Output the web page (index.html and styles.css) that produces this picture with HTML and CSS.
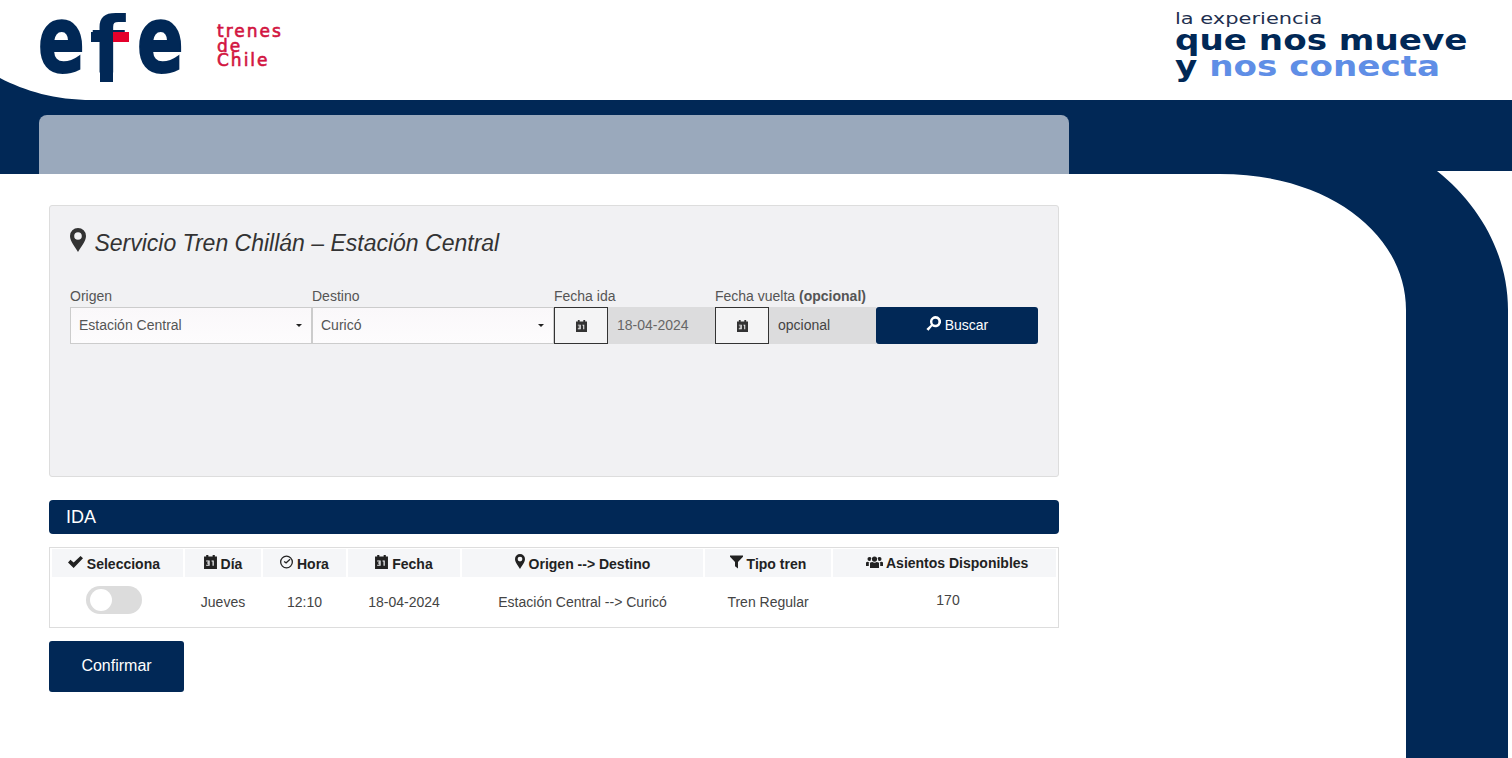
FILE: index.html
```html
<!DOCTYPE html>
<html lang="es">
<head>
  <meta charset="UTF-8">
  <meta name="viewport" content="width=device-width, initial-scale=1.0">
  <title>EFE Trenes de Chile - Venta de pasajes</title>
  <link rel="stylesheet" href="styles.css">
</head>
<body>
  <svg width="0" height="0" class="icon-defs">
    <symbol id="i-pin" viewBox="0 0 16 24"><path fill-rule="evenodd" d="M8 0a8 8 0 0 1 8 8c0 5-5 11-8 16C5 19 0 13 0 8a8 8 0 0 1 8-8zm0 4.2a3.8 3.8 0 1 0 0 7.6 3.8 3.800 0 0 0 0-7.600z"/></symbol>
    <symbol id="i-cal" viewBox="0 0 12 13"><path fill-rule="evenodd" d="M2 0h2v1.500h4V0h2v1.500h2V13H0V1.500h2zM2 5h3.200v5H2V9h2V8H2.800V7H4V6H2zM7 5h2v5H7.900V6H7z"/></symbol>
    <symbol id="i-search" viewBox="0 0 16 16"><path fill-rule="evenodd" d="M10 0a6 6 0 1 1-3.400 10.900L2.600 15.800.4 13.800l4.800-4.600A6 6 0 0 1 10 0zm0 2.800a3.200 3.200 0 1 0 0 6.400 3.200 3.200 0 0 0 0-6.400z"/></symbol>
    <symbol id="i-check" viewBox="0 0 16 13"><path d="M0 7l2.600-2.800L6 7l7.400-7L16 2.600 6 13z"/></symbol>
    <symbol id="i-clock" viewBox="0 0 14 14"><path fill-rule="evenodd" d="M7 0a7 7 0 1 1 0 14A7 7 0 0 1 7 0zm0 1.400a5.600 5.600 0 1 0 0 11.200A5.600 5.600 0 0 0 7 1.400zM10.400 3.600l.9 1L6.600 8.800 4 6.900l.8-1.100 1.700 1.200z"/></symbol>
    <symbol id="i-filter" viewBox="0 0 14 14"><path d="M0 0h14v1.400L8.600 7v7L5.400 11.600V7L0 1.400z"/></symbol>
    <symbol id="i-group" viewBox="0 0 17 13"><path d="M8.500 1.500a2.600 2.600 0 1 1 0 5.200 2.600 2.600 0 0 1 0-5.200zM4 7.800c.8-.6 1.500-.8 2.400-.8.600.5 1.300.7 2.100.7s1.500-.2 2.100-.7c.9 0 1.600.2 2.400.8V13H4zM3.500 2a2 2 0 0 1 1.900 1.300c-.5.700-.7 1.500-.6 2.300-.4.300-.8.500-1.300.5a2 2 0 1 1 0-4.100zM13.500 2a2 2 0 1 1 0 4.100c-.5 0-.9-.2-1.300-.5.100-.8-.1-1.600-.6-2.300A2 2 0 0 1 13.500 2zM0 7.500c.5-.5 1-.7 1.800-.7.500.4 1.100.5 1.700.5-.4.300-.7.500-.7.900V11H0zM17 7.500V11h-2.800V8.200c0-.4-.3-.6-.7-.9.600 0 1.200-.1 1.700-.5.800 0 1.300.2 1.800.7z"/></symbol>
  </svg>

  <!-- curvas del fondo -->
  <svg class="decor" width="1512" height="758" viewBox="0 0 1512 758">
    <path fill="#012856" d="M0 78C25 91 55 100 92 100H0z"/>
    <rect x="1437" y="171" width="75" height="4" fill="#fff"/>
    <path fill="#012856" d="M1220 174C1330 174 1406 235 1406 310V758H1508V310C1508 255 1480 205 1437 171H1220z"/>
  </svg>

  <header class="topbar">
    <a class="brand" href="#">
      <span class="brand-mark">
        <span class="brand-e">e</span>
        <span class="brand-f">f</span>
        <span class="brand-e brand-e-last">e</span>
      </span>
      <span class="brand-name">trenes<br>de<br>Chile</span>
    </a>
    <div class="slogan">
      <div class="slogan-small">la experiencia</div>
      <div class="slogan-big">que nos mueve</div>
      <div class="slogan-big">y <span class="slogan-blue">nos conecta</span></div>
    </div>
  </header>

  <div class="band">
    <div class="band-panel"></div>
  </div>

  <main class="content">
    <section class="search-box">
      <h3 class="search-title"><svg class="pin-big"><use href="#i-pin"/></svg> Servicio Tren Chillán – Estación Central</h3>
      <form class="search-form">
        <div class="field">
          <label for="origen">Origen</label>
          <div class="select-wrap">
            <select id="origen"><option>Estación Central</option></select>
          </div>
        </div>
        <div class="field">
          <label for="destino">Destino</label>
          <div class="select-wrap">
            <select id="destino"><option>Curicó</option></select>
          </div>
        </div>
        <div class="field">
          <label for="fechaIda">Fecha ida</label>
          <div class="date-group">
            <button type="button" class="date-btn"><svg class="ico-cal"><use href="#i-cal"/></svg></button>
            <input id="fechaIda" type="text" value="18-04-2024" readonly>
          </div>
        </div>
        <div class="field">
          <label for="fechaVuelta">Fecha vuelta <b>(opcional)</b></label>
          <div class="date-group">
            <button type="button" class="date-btn"><svg class="ico-cal"><use href="#i-cal"/></svg></button>
            <input id="fechaVuelta" type="text" placeholder="opcional" readonly>
          </div>
        </div>
        <div class="field">
          <label class="label-empty">&nbsp;</label>
          <button type="button" class="btn-search"><svg class="ico-search"><use href="#i-search"/></svg> Buscar</button>
        </div>
      </form>
    </section>

    <h4 class="ida-title">IDA</h4>

    <div class="table-wrap">
      <table class="trips">
        <colgroup>
          <col class="c-sel"><col class="c-dia"><col class="c-hora"><col class="c-fecha"><col class="c-ruta"><col class="c-tipo"><col class="c-asientos">
        </colgroup>
        <thead>
          <tr>
            <th class="cell-sel"><svg class="ico ico-check"><use href="#i-check"/></svg> Selecciona</th>
            <th><svg class="ico"><use href="#i-cal"/></svg> Día</th>
            <th><svg class="ico"><use href="#i-clock"/></svg> Hora</th>
            <th><svg class="ico"><use href="#i-cal"/></svg> Fecha</th>
            <th><svg class="ico ico-pin"><use href="#i-pin"/></svg> Origen --&gt; Destino</th>
            <th><svg class="ico"><use href="#i-filter"/></svg> Tipo tren</th>
            <th class="cell-seats-head"><svg class="ico ico-group"><use href="#i-group"/></svg> Asientos Disponibles</th>
          </tr>
        </thead>
        <tbody>
          <tr>
            <td class="cell-sel"><span class="toggle"></span></td>
            <td>Jueves</td>
            <td>12:10</td>
            <td>18-04-2024</td>
            <td>Estación Central --&gt; Curicó</td>
            <td>Tren Regular</td>
            <td class="cell-seats">170</td>
          </tr>
        </tbody>
      </table>
    </div>

    <button type="button" class="btn-confirm">Confirmar</button>
  </main>
</body>
</html>
```

FILE: styles.css
```css
* {
  box-sizing: border-box;
  margin: 0;
  padding: 0;
}

html, body {
  height: 758px;
  overflow: hidden;
}

body {
  position: relative;
  font-family: "Liberation Sans", Arial, sans-serif;
  font-size: 14px;
  color: #333;
  background: #fff;
}

.icon-defs {
  position: absolute;
}

.decor {
  position: absolute;
  top: 0;
  left: 0;
  z-index: 1;
}

/* cabecera */
.topbar {
  height: 100px;
  display: flex;
  justify-content: space-between;
  padding: 0 45px 0 38px;
}

.brand {
  display: flex;
  text-decoration: none;
  position: relative;
  z-index: 2;
}

.brand-mark {
  display: flex;
  flex: 0 0 144px;
  height: 90px;
  align-items: flex-start;
  font-family: "DejaVu Sans", sans-serif;
  font-weight: bold;
  font-size: 86px;
  line-height: 90px;
  color: #012856;
}

.brand-e {
  display: block;
  margin: -3px -5px 0 0;
  -webkit-text-stroke: 2px #012856;
  transform: scale(.8, 1.05);
  transform-origin: left 70px;
}

.brand-e-last {
  margin: -3px -14px 0 8px;
}

.brand-f {
  display: block;
  position: relative;
  flex: 0 0 38px;
  font-size: 78px;
  line-height: 80px;
  margin-top: 6px;
}

.brand-f::before {
  content: "";
  position: absolute;
  left: 9px;
  top: 56px;
  width: 13px;
  height: 20px;
  background: #012856;
}

.brand-f::after {
  content: "";
  position: absolute;
  left: 0;
  top: 26px;
  width: 38px;
  height: 10px;
  background: linear-gradient(90deg, #012856 58%, #e4002b 58%);
}

.brand-name {
  margin: 24px 0 0 35px;
  font-family: "DejaVu Sans", sans-serif;
  font-size: 17px;
  line-height: 14.700px;
  letter-spacing: 2px;
  -webkit-text-stroke: .6px #d2143f;
  color: #d2143f;
}

.slogan {
  width: 292px;
  padding-top: 10px;
  font-family: "DejaVu Sans", sans-serif;
  color: #012856;
}

.slogan-small {
  font-size: 16.500px;
  line-height: 17px;
  color: #22304f;
  transform: scaleX(1.270);
  transform-origin: left;
}

.slogan-big {
  font-weight: bold;
  font-size: 29px;
  line-height: 26px;
  white-space: nowrap;
  transform: scaleX(1.178);
  transform-origin: left;
}

.slogan-blue {
  color: #5f8ee6;
}

.band {
  height: 74px;
  padding: 15px 0 0 39px;
  background: #012856;
}

.band-panel {
  width: 1030px;
  height: 59px;
  background: #9aa9bc;
  border-radius: 8px 8px 0 0;
}

/* contenido */
.content {
  width: 1010px;
  margin-left: 49px;
  padding-top: 31px;
}

.search-box {
  height: 272px;
  padding: 20px;
  background: #f1f1f3;
  border: 1px solid #ddd;
  border-radius: 3px;
}

.search-title {
  height: 34px;
  font-size: 23px;
  font-style: italic;
  font-weight: normal;
  line-height: 34px;
  margin-bottom: 28px;
  color: #333;
}

.pin-big {
  width: 16px;
  height: 24px;
  fill: #333;
  margin-right: 2px;
  vertical-align: -1px;
}

.search-form {
  display: grid;
  grid-template-columns: 242px 242px 161px 161px 162px;
}

.field label {
  display: block;
  height: 19px;
  line-height: 17px;
  color: #555;
}

.select-wrap {
  position: relative;
}

.select-wrap::after {
  content: "";
  position: absolute;
  right: 10px;
  top: 17px;
  border-left: 3.500px solid transparent;
  border-right: 3.500px solid transparent;
  border-top: 3.500px solid #222;
}

.select-wrap select {
  display: block;
  width: 100%;
  height: 37px;
  padding: 0 0 2px 8px;
  appearance: none;
  font-family: inherit;
  font-size: 14px;
  color: #555;
  background: linear-gradient(#faf8fa, #fdfcfd);
  border: 1px solid #ccc;
  border-radius: 0;
}

.date-group {
  display: flex;
  height: 37px;
}

.date-btn {
  flex: 0 0 54px;
  background: #f4f4f5;
  border: 1px solid #333;
  display: flex;
  align-items: center;
  justify-content: center;
}

.ico-cal {
  width: 11px;
  height: 12px;
  fill: #333;
}

.date-group input {
  flex: 1;
  min-width: 0;
  padding: 0 0 2px 9px;
  font-family: inherit;
  font-size: 14px;
  color: #666;
  background: #dcdcdd;
  border: 0;
}

.date-group input::placeholder {
  color: #444;
  opacity: 1;
}

.btn-search {
  display: block;
  width: 100%;
  height: 37px;
  padding-bottom: 2px;
  font-family: inherit;
  font-size: 14px;
  color: #fff;
  background: #012856;
  border: 0;
  border-radius: 3px;
}

.ico-search {
  width: 15px;
  height: 15px;
  fill: #fff;
  vertical-align: -1px;
}

.ida-title {
  height: 34px;
  margin-top: 23px;
  padding-left: 17px;
  font-size: 18px;
  font-weight: normal;
  line-height: 34px;
  color: #fff;
  background: #012856;
  border-radius: 4px;
}

.table-wrap {
  margin-top: 13px;
  border: 1px solid #ddd;
  background: #fff;
}

.trips {
  table-layout: fixed;
  width: 1008px;
  border-collapse: separate;
  border-spacing: 2px 1px;
  color: #444;
}

.c-sel { width: 131px; }
.c-dia { width: 76px; }
.c-hora { width: 83px; }
.c-fecha { width: 112px; }
.c-ruta { width: 241px; }
.c-tipo { width: 126px; }
.c-asientos { width: 223px; }

.trips th {
  height: 28px;
  background: #f5f6f8;
  color: #222;
  font-weight: bold;
  text-align: center;
  white-space: nowrap;
}

.trips td {
  height: 48px;
  text-align: center;
}

.trips .cell-sel {
  padding-right: 7px;
}

.trips .cell-seats-head {
  padding-left: 5px;
}

.ico {
  width: 13px;
  height: 14px;
  fill: #222;
  vertical-align: 0;
}

.ico-check {
  width: 15px;
}

.ico-pin {
  width: 10px;
  height: 15px;
}

.ico-group {
  width: 17px;
  height: 13px;
}

.trips .cell-seats {
  padding: 0 0 4px 7px;
}

.toggle {
  display: block;
  position: relative;
  width: 56px;
  height: 28px;
  margin: 0 auto 4px;
  background: #dcdcdc;
  border-radius: 14px;
}

.toggle::after {
  content: "";
  position: absolute;
  left: 4px;
  top: 3px;
  width: 22px;
  height: 22px;
  background: #fff;
  border-radius: 50%;
}

.btn-confirm {
  display: block;
  width: 135px;
  height: 51px;
  margin-top: 13px;
  padding-bottom: 2px;
  font-family: inherit;
  font-size: 16px;
  color: #fff;
  background: #012856;
  border: 0;
  border-radius: 3px;
}
```
